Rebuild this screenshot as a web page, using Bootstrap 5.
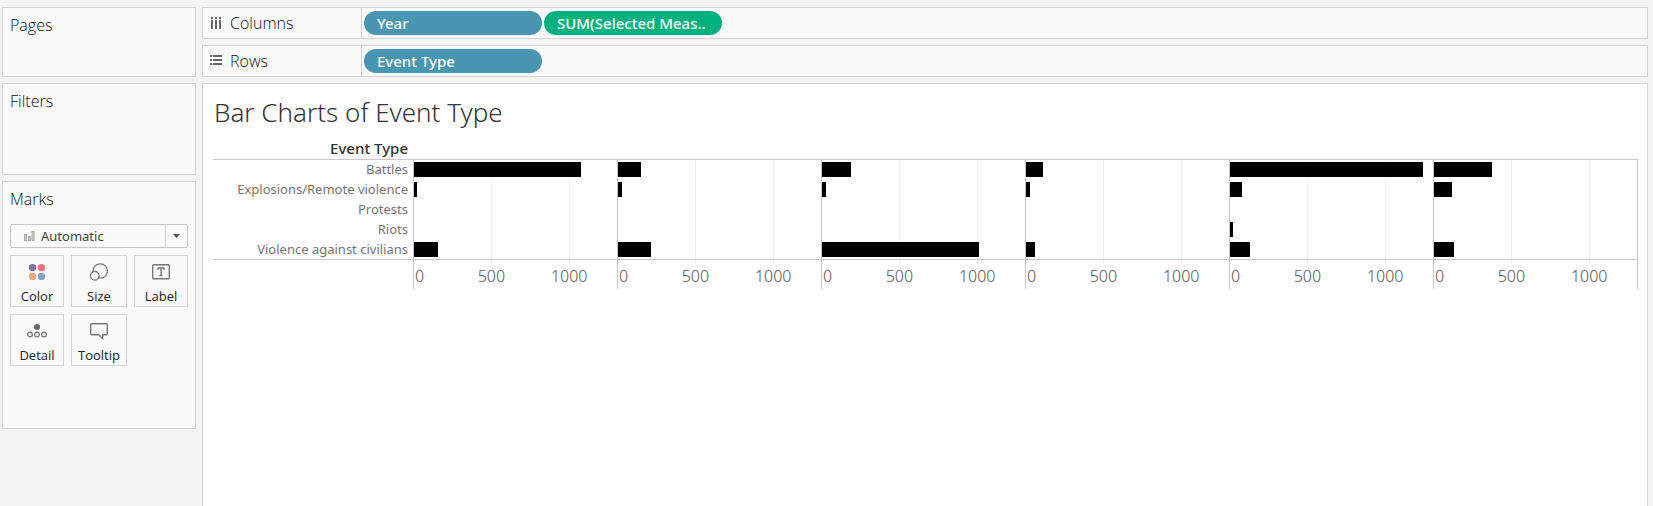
<!DOCTYPE html>
<html lang="en">
<head>
<meta charset="utf-8">
<meta name="viewport" content="width=device-width, initial-scale=1">
<title>Bar Charts of Event Type</title>
<link href="https://cdn.jsdelivr.net/npm/bootstrap@5.3.0/dist/css/bootstrap.min.css" rel="stylesheet">
<style>
  body { background: #f4f4f4; color: #333; font: 15px/20px "Open Sans", "Noto Sans", sans-serif; }
  .workspace { min-height: 100vh; padding: 7px 5px 0 2px; gap: 6px; }
  .side { width: 194px; gap: 6px; }
  .main-area { gap: 6px; min-width: 0; }
  .pane { background: #fafafa; border: 1px solid #d4d4d4; }
  .side .pane { padding: 7px; }
  .side h2, .shelf h2 { font-size: 16px; line-height: 20px; font-weight: 300; color: #111; margin: 0; }
  .pages { height: 70px; }
  .filters { height: 92px; }
  .marks { height: 248px; }
  .mark-type { height: 24px; margin-top: 15px; border: 1px solid #c8c8c8; border-radius: 2px; background: #fafafa; padding-left: 13px; }
  .mark-type select { appearance: none; border: 0; background: none; color: #444; font-size: 13px; font-family: "Noto Sans", sans-serif; padding: 0 0 0 6px; outline: 0; min-width: 0; }
  .mark-type .caret { width: 22px; border-left: 1px solid #d4d4d4; pointer-events: none; }
  .mark-grid { display: grid; grid-template-columns: 54fr 56fr 54fr; gap: 7px; margin-top: 7px; }
  .mark-btn { height: 52px; border: 1px solid #d4d4d4; background: #fafafa; color: #222; font-size: 13px; line-height: 18px; padding: 5px 0 0; gap: 4px; }
  .shelf { height: 32px; }
  .shelf-name { width: 159px; padding-left: 6px; gap: 6px; border-right: 1px solid #d4d4d4; }
  .pills { padding-left: 2px; gap: 2px; }
  .pill { width: 178px; height: 24px; border: 0; border-radius: 12px; background: #4996b2; color: #fff; padding: 0 13px; font-family: "Noto Sans", sans-serif; font-weight: 500; text-align: left; line-height: 24px; white-space: nowrap; }
  .pill.measure { background: #00b180; }
  .view { background: #fff; border: 1px solid #d4d4d4; border-bottom: 0; padding: 10px 9px 0 10px; }
  .view h1 { font-family: "Noto Sans", sans-serif; font-size: 26px; line-height: 36px; font-weight: 300; margin: 0 0 0 1px; }
  .chart { width: 100%; table-layout: fixed; border-collapse: separate; border-spacing: 0; margin-top: 9px; font-family: "Noto Sans", sans-serif; }
  .chart th, .chart td { padding: 0; vertical-align: top; }
  .chart .labels { width: 200px; }
  .chart .edge { width: 1px; }
  .chart tbody th, .chart thead th { text-align: right; padding-right: 5px; }
  .chart thead th { height: 21px; font-size: 15px; line-height: 19px; font-weight: 500; }
  .chart thead th, .chart thead td { border-bottom: 1px solid #c8c8c8; }
  .chart tbody th { height: 20px; font-size: 13px; line-height: 18px; font-weight: 400; color: #757575; white-space: nowrap; }
  .chart tbody tr:last-child > * { border-bottom: 1px solid #c8c8c8; }
  .chart tbody td, .chart tfoot td { border-left: 1px solid #c8c8c8; background: linear-gradient(#f0f0f0, #f0f0f0) 38.1% 0 / 1px 100% no-repeat, linear-gradient(#f0f0f0, #f0f0f0) 76.7% 0 / 1px 100% no-repeat; }
  .chart tbody td { padding-top: 2px; }
  .chart tbody td.edge, .chart tfoot td.edge { background: none; }
  .chart tfoot td { height: 29px; background-size: 1px 4px; font-size: 16px; font-weight: 300; color: #555; padding-top: 6px; }
  .bar { height: 15px; background: #000; }
  .axis span { width: 38.3%; text-align: center; }
  .axis span:first-child { width: 19%; text-align: left; padding-left: 1px; }
</style>
</head>
<body>
<div class="workspace d-flex">
  <aside class="side d-flex flex-column flex-shrink-0">
    <section class="pane pages"><h2>Pages</h2></section>
    <section class="pane filters"><h2>Filters</h2></section>
    <section class="pane marks">
      <h2>Marks</h2>
      <div class="mark-type d-flex align-items-stretch">
        <svg class="align-self-center" width="11" height="10" viewBox="0 0 11 10" fill="#ccc" stroke="#aaa" aria-hidden="true"><rect x=".5" y="3.500" width="2" height="6"/><rect x="4.500" y="5.500" width="2" height="4"/><rect x="8" y=".5" width="2" height="9"/></svg>
        <select class="flex-grow-1" aria-label="Mark type"><option>Automatic</option></select>
        <span class="caret d-flex align-items-center justify-content-center"><svg width="7" height="4" viewBox="0 0 7 4" aria-hidden="true"><path d="M0 0h7L3.500 4z" fill="#555"/></svg></span>
      </div>
      <div class="mark-grid">
        <button class="mark-btn d-flex flex-column align-items-center" type="button">
          <svg width="22" height="22" viewBox="0 0 22 22" aria-hidden="true"><circle cx="6.600" cy="6.600" r="3.700" fill="#85709c"/><circle cx="15.400" cy="6.600" r="3.700" fill="#fa6e82"/><circle cx="6.600" cy="15.400" r="3.700" fill="#f3a67c"/><circle cx="15.400" cy="15.400" r="3.700" fill="#7ea3ca"/></svg>
          Color</button>
        <button class="mark-btn d-flex flex-column align-items-center" type="button">
          <svg width="22" height="22" viewBox="0 0 22 22" fill="#fafafa" stroke="#777" stroke-width="1.300" aria-hidden="true"><circle cx="12.200" cy="10" r="7.200"/><circle cx="6.800" cy="14.800" r="4.300"/></svg>
          Size</button>
        <button class="mark-btn d-flex flex-column align-items-center" type="button">
          <svg width="22" height="22" viewBox="0 0 22 22" fill="none" stroke="#777" aria-hidden="true"><rect x="2.700" y="3.700" width="16.600" height="14" rx="1" stroke-width="1.400"/><path d="M8 9V7h6v2M11 7v7.500M9.300 14.500h3.400" stroke-width="1.300"/></svg>
          Label</button>
        <button class="mark-btn d-flex flex-column align-items-center" type="button">
          <svg width="22" height="22" viewBox="0 0 22 22" fill="none" stroke="#777" stroke-width="1.300" aria-hidden="true"><circle cx="11" cy="7" r="3" fill="#666" stroke="none"/><circle cx="4" cy="14.500" r="2.300"/><circle cx="11" cy="14.500" r="2.300"/><circle cx="18" cy="14.500" r="2.300"/></svg>
          Detail</button>
        <button class="mark-btn d-flex flex-column align-items-center" type="button">
          <svg width="22" height="22" viewBox="0 0 22 22" fill="none" stroke="#777" stroke-width="1.400" aria-hidden="true"><path d="M3.700 3.700h14.600q1 0 1 1v9q0 1-1 1h-3.600v3.800l-4.200-3.800H3.700q-1 0-1-1v-9q0-1 1-1z"/></svg>
          Tooltip</button>
      </div>
    </section>
  </aside>

  <main class="main-area d-flex flex-column flex-grow-1">
    <section class="pane shelf d-flex">
      <div class="shelf-name d-flex align-items-center flex-shrink-0">
        <svg width="15" height="12" viewBox="0 0 15 12" fill="#666" shape-rendering="crispEdges" aria-hidden="true"><path d="M2 0h2v2H2zM6 0h2v2H6zM10 0h2v2h-2zM2 3h2v9H2zM6 3h2v9H6zM10 3h2v9h-2z"/></svg>
        <h2>Columns</h2>
      </div>
      <div class="pills d-flex align-items-center">
        <button class="pill" type="button">Year</button>
        <button class="pill measure" type="button">SUM(Selected Meas..</button>
      </div>
    </section>
    <section class="pane shelf d-flex">
      <div class="shelf-name d-flex align-items-center flex-shrink-0">
        <svg width="15" height="12" viewBox="0 0 15 12" fill="#666" shape-rendering="crispEdges" aria-hidden="true"><path d="M1 0h2v2H1zM1 4h2v2H1zM1 8h2v2H1zM4 0h9v2H4zM4 4h9v2H4zM4 8h9v2H4z"/></svg>
        <h2>Rows</h2>
      </div>
      <div class="pills d-flex align-items-center">
        <button class="pill" type="button">Event Type</button>
      </div>
    </section>

    <section class="view flex-grow-1">
      <h1>Bar Charts of Event Type</h1>
      <table class="chart">
        <thead>
          <tr><th class="labels" scope="col">Event Type</th><td></td><td></td><td></td><td></td><td></td><td></td><td class="edge"></td></tr>
        </thead>
        <tbody>
          <tr><th scope="row">Battles</th>
            <td><div class="bar" style="width:82.3%"></div></td><td><div class="bar" style="width:11.3%"></div></td><td><div class="bar" style="width:14.3%"></div></td><td><div class="bar" style="width:8.4%"></div></td><td><div class="bar" style="width:95.1%"></div></td><td><div class="bar" style="width:28.6%"></div></td><td class="edge"></td></tr>
          <tr><th scope="row">Explosions/Remote violence</th>
            <td><div class="bar" style="width:1.5%"></div></td><td><div class="bar" style="width:2%"></div></td><td><div class="bar" style="width:2%"></div></td><td><div class="bar" style="width:2%"></div></td><td><div class="bar" style="width:5.9%"></div></td><td><div class="bar" style="width:8.9%"></div></td><td class="edge"></td></tr>
          <tr><th scope="row">Protests</th><td></td><td></td><td></td><td></td><td></td><td></td><td class="edge"></td></tr>
          <tr><th scope="row">Riots</th><td></td><td></td><td></td><td></td><td><div class="bar" style="width:1.5%"></div></td><td></td><td class="edge"></td></tr>
          <tr><th scope="row">Violence against civilians</th>
            <td><div class="bar" style="width:11.8%"></div></td><td><div class="bar" style="width:16.3%"></div></td><td><div class="bar" style="width:77.3%"></div></td><td><div class="bar" style="width:4.4%"></div></td><td><div class="bar" style="width:9.9%"></div></td><td><div class="bar" style="width:9.9%"></div></td><td class="edge"></td></tr>
        </tbody>
        <tfoot>
          <tr><th></th>
            <td><div class="axis d-flex"><span>0</span><span>500</span><span>1000</span></div></td>
            <td><div class="axis d-flex"><span>0</span><span>500</span><span>1000</span></div></td>
            <td><div class="axis d-flex"><span>0</span><span>500</span><span>1000</span></div></td>
            <td><div class="axis d-flex"><span>0</span><span>500</span><span>1000</span></div></td>
            <td><div class="axis d-flex"><span>0</span><span>500</span><span>1000</span></div></td>
            <td><div class="axis d-flex"><span>0</span><span>500</span><span>1000</span></div></td>
            <td class="edge"></td></tr>
        </tfoot>
      </table>
    </section>
  </main>
</div>
<script src="https://cdn.jsdelivr.net/npm/bootstrap@5.3.0/dist/js/bootstrap.bundle.min.js"></script>
</body>
</html>
